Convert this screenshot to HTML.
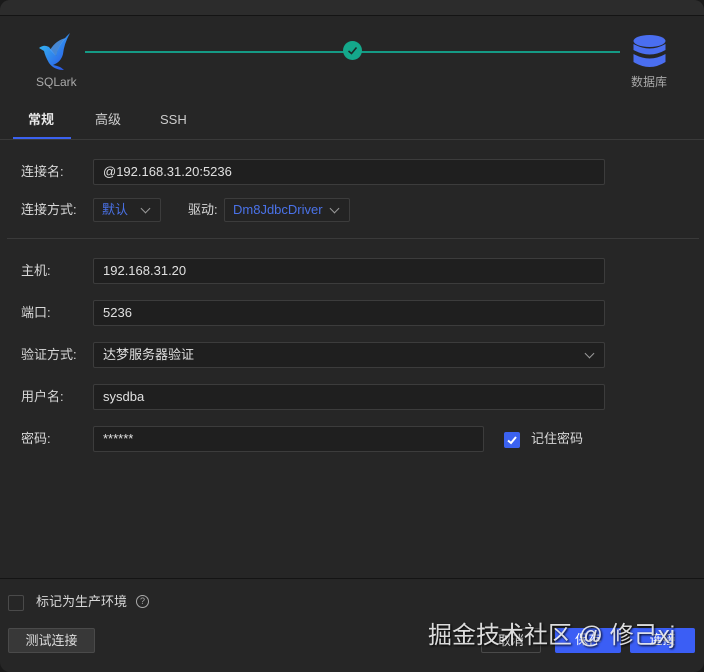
<!DOCTYPE html><html><head><meta charset="utf-8"><style>
body{margin:0;width:704px;height:672px;background:#1a1a1a;font-family:"Liberation Sans","Noto Sans CJK SC",sans-serif;font-size:13px;line-height:16px;color:#d8d8d8;overflow:hidden;position:relative}
.win{position:absolute;left:0;top:0;width:704px;height:672px;background:#262626;border-radius:10px;overflow:hidden}
.top{position:absolute;left:0;top:0;width:704px;height:15px;background:#2c2c2c;border-bottom:1px solid #141414}
.a{position:absolute}
.lbl{position:absolute;left:21px;line-height:16px}
.in{position:absolute;left:93px;height:24px;background:#1f1f1f;border:1px solid #3c3c3c;border-radius:2px;line-height:24px;padding-left:9px;box-sizing:border-box;width:512px;color:#e0e0e0}
.sel{position:absolute;height:24px;border:1px solid #3c3c3c;border-radius:2px;box-sizing:border-box;line-height:22px;color:#4a72e8;padding-left:8px;background:#232323}
.chev{position:absolute;width:6px;height:6px;border-right:1.3px solid #999;border-bottom:1.3px solid #999;transform:rotate(45deg)}
.hr{position:absolute;height:1px;background:#3a3a3a}
.btn{position:absolute;top:628px;height:25px;border-radius:2px;box-sizing:border-box;line-height:23px;text-align:center;font-size:13px}
</style></head><body><div class="win">
<div class="top"></div>
<svg class="a" style="left:36px;top:30px" width="40" height="44" viewBox="0 0 40 44">
<defs><linearGradient id="g" x1="0" y1="0" x2="1" y2="1"><stop offset="0" stop-color="#35c6f0"/><stop offset="1" stop-color="#2b4be8"/></linearGradient></defs>
<path d="M3 18 Q8 14 13 17 L20 26 Q22 14 34 3 Q28 14 27 24 Q25 32 17 35 Q24 36 28 40 Q18 40 13 33 Q9 26 8 21 Z" fill="url(#g)"/>
<path d="M14 20 Q20 10 30 8 Q22 16 20 26 Z" fill="#4fa0ff" opacity=".8"/></svg>
<div class="a" style="left:36px;top:74px;font-size:12px;color:#aaa">SQLark</div>
<div class="a" style="left:85px;top:51px;width:535px;height:2px;background:#159a85"></div>
<div class="a" style="left:343px;top:41px;width:19px;height:19px;border-radius:50%;background:#14a88b"></div>
<svg class="a" style="left:343px;top:41px" width="19" height="19"><path d="M5.5 10 L8.5 12.5 L13.5 6.5" stroke="#1a2a26" stroke-width="1.6" fill="none"/></svg>
<svg class="a" style="left:632px;top:34px" width="35" height="36" viewBox="0 0 35 36">
<ellipse cx="17.5" cy="7" rx="16" ry="6" fill="#4a6ef0"/>
<path d="M1.5 10 Q17.5 19 33.5 10 V16 Q17.5 25 1.5 16Z" fill="#4a6ef0"/>
<path d="M1.5 20 Q17.5 29 33.5 20 V28 Q17.5 38 1.5 28Z" fill="#4a6ef0"/></svg>
<div class="a" style="left:631px;top:74px;font-size:12px;color:#aaa">数据库</div>
<div class="a" style="left:28px;top:112px;color:#e8e8e8;font-weight:bold">常规</div>
<div class="a" style="left:95px;top:112px;color:#ccc">高级</div>
<div class="a" style="left:160px;top:112px;color:#ccc">SSH</div>
<div class="a" style="left:13px;top:137px;width:58px;height:2px;background:#3b62f0"></div>
<div class="hr" style="left:0;top:139px;width:704px"></div>
<div class="lbl" style="top:164px">连接名:</div><div class="in" style="top:159px;height:26px">@192.168.31.20:5236</div>
<div class="lbl" style="top:202px">连接方式:</div>
<div class="sel" style="left:93px;top:198px;width:68px">默认<div class="chev" style="left:48px;top:6px"></div></div>
<div class="a" style="left:188px;top:202px">驱动:</div>
<div class="sel" style="left:224px;top:198px;width:126px">Dm8JdbcDriver<div class="chev" style="left:106px;top:6px"></div></div>
<div class="hr" style="left:7px;top:238px;width:692px"></div>
<div class="lbl" style="top:263px">主机:</div><div class="in" style="top:258px;height:26px">192.168.31.20</div>
<div class="lbl" style="top:305px">端口:</div><div class="in" style="top:300px;height:26px">5236</div>
<div class="lbl" style="top:347px">验证方式:</div><div class="in" style="top:342px;height:26px">达梦服务器验证<div class="chev" style="left:492px;top:7px"></div></div>
<div class="lbl" style="top:389px">用户名:</div><div class="in" style="top:384px;height:26px">sysdba</div>
<div class="lbl" style="top:431px">密码:</div><div class="in" style="top:426px;height:26px;width:391px">******</div>
<div class="a" style="left:504px;top:432px;width:16px;height:16px;background:#3b62f0;border-radius:2px"></div>
<svg class="a" style="left:504px;top:432px" width="16" height="16"><path d="M4 8.5 L7 11 L12 5" stroke="#fff" stroke-width="2" fill="none"/></svg>
<div class="a" style="left:531px;top:431px">记住密码</div>
<div class="hr" style="left:0;top:578px;width:704px;background:#141414"></div>
<div class="a" style="left:8px;top:595px;width:14px;height:14px;border:1px solid #4a4a4a;border-radius:2px"></div>
<div class="a" style="left:36px;top:594px">标记为生产环境</div>
<div class="a" style="left:136px;top:595px;width:11px;height:11px;border:1px solid #aaa;border-radius:50%;font-size:9px;line-height:11px;text-align:center;color:#aaa">?</div>
<div class="btn" style="left:8px;width:87px;background:#383838;border:1px solid #4a4a4a;color:#ddd">测试连接</div>
<div class="btn" style="left:481px;width:60px;border:1px solid #4a4a4a;color:#ddd">取消</div>
<div class="btn" style="left:555px;width:66px;background:#3b5ef5;color:#fff">保存</div>
<div class="btn" style="left:630px;width:65px;background:#3b5ef5;color:#fff">连接</div>
<div class="a" style="left:428px;top:622px;font-size:24px;line-height:28px;color:rgba(255,255,255,.85);text-shadow:1px 1px 2px #000;white-space:nowrap">掘金技术社区 @ 修己xj</div>
</div></body></html>
